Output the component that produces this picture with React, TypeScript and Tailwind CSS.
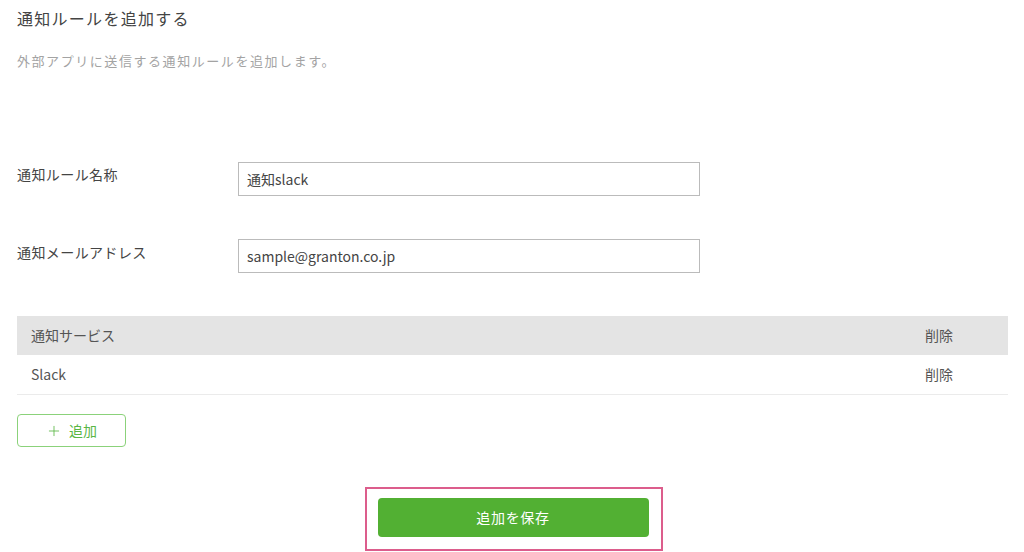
import { Plus } from "lucide-react"

const font = { fontFamily: '"Noto Sans CJK JP", "Noto Sans", sans-serif' }

export default function App() {
    return (
        <div className="w-[1024px] h-[552px] overflow-hidden bg-white px-[17px] text-[#444]" style={font}>
            {/* Title */}
            <h1 className="pt-[8px] text-[16px] leading-[20px] tracking-[0.08em] text-[#444]">
                通知ルールを追加する
            </h1>
            <p className="mt-[23px] text-[13px] leading-[20px] tracking-[0.12em] text-[#a3a3a3]">
                外部アプリに送信する通知ルールを追加します。
            </p>

            {/* Form */}
            <div className="mt-[91px] flex items-start">
                <label className="w-[221px] pt-[2px] text-[14px] leading-[20px] tracking-[0.03em]">通知ルール名称</label>
                <div className="flex h-[34px] w-[462px] items-center border border-[#bbb] px-[8px] text-[14px] text-[#444]">
                    通知slack
                </div>
            </div>
            <div className="mt-[43px] flex items-start">
                <label className="w-[221px] pt-[3px] text-[14px] leading-[20px] tracking-[0.03em]">通知メールアドレス</label>
                <div className="flex h-[34px] w-[462px] items-center border border-[#bbb] px-[8px] text-[14px] text-[#444]">
                    sample@granton.co.jp
                </div>
            </div>

            {/* Table */}
            <div className="mt-[43px] w-[991px] text-[14px] text-[#555]">
                <div className="flex h-[39px] items-center justify-between bg-[#e4e4e4] pl-[14px] pr-[55px]">
                    <span>通知サービス</span>
                    <span>削除</span>
                </div>
                <div className="flex h-[40px] items-center justify-between border-b border-[#ebebeb] pl-[14px] pr-[55px]">
                    <span>Slack</span>
                    <span>削除</span>
                </div>
            </div>

            <button className="mt-[19px] flex h-[33px] w-[109px] items-center justify-center gap-[7px] rounded-[4px] border border-[#8bd27a] text-[14px] text-[#5ab645]">
                <Plus className="h-[16px] w-[16px]" strokeWidth={1.25} />
                追加
            </button>

            {/* Save */}
            <div className="mt-[40px] flex justify-center">
                <div className="ml-[3px] border-[2px] border-[#dc5d8c] pl-[11px] pr-[12px] pt-[9px] pb-[12px]">
                    <button className="flex h-[39px] w-[271px] items-center justify-center rounded-[4px] bg-[#52b033] text-[14px] tracking-[0.05em] text-white">
                        追加を保存
                    </button>
                </div>
            </div>
        </div>
    )
}
